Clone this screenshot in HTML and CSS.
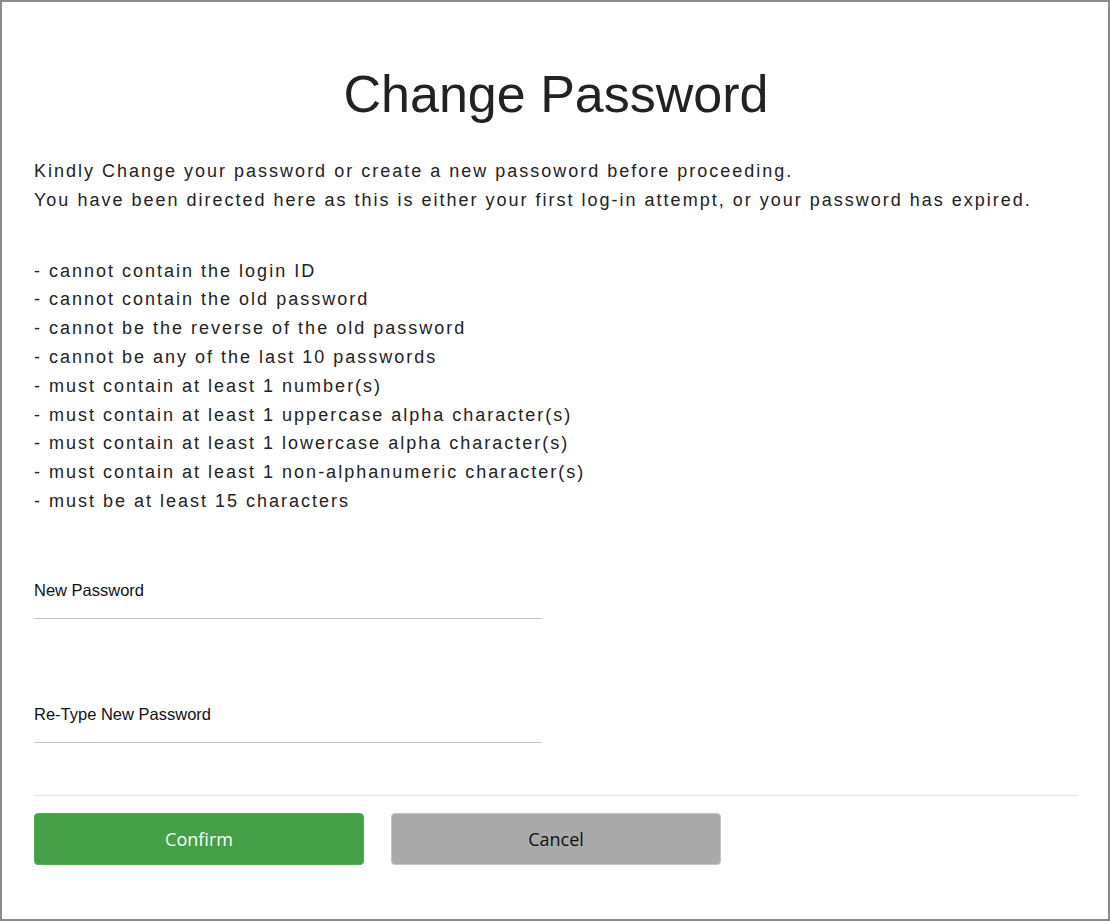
FILE: index.html
```html
<!DOCTYPE html>
<html lang="en">
<head>
  <meta charset="UTF-8" />
  <meta name="viewport" content="width=device-width, initial-scale=1.0" />
  <title>Change Password</title>
  <link rel="stylesheet" href="styles.css">
</head>
<body>
  <div class="frame">
    <h1>Change Password</h1>
    <p class="intro">
      Kindly Change your password or create a new passoword before proceeding.<br/>
      You have been directed here as this is either your first log-in attempt, or your password has expired.
    </p>
    <ul class="rules">
      <li>- cannot contain the login ID</li>
      <li>- cannot contain the old password</li>
      <li>- cannot be the reverse of the old password</li>
      <li>- cannot be any of the last 10 passwords</li>
      <li>- must contain at least 1 number(s)</li>
      <li>- must contain at least 1 uppercase alpha character(s)</li>
      <li>- must contain at least 1 lowercase alpha character(s)</li>
      <li>- must contain at least 1 non-alphanumeric character(s)</li>
      <li>- must be at least 15 characters</li>
    </ul>

    <div class="field">
      <label for="newPass">New Password</label>
      <input type="password" id="newPass" />
    </div>
    <div class="field second">
      <label for="rePass">Re-Type New Password</label>
      <input type="password" id="rePass" />
    </div>

    <hr class="sep" />

    <div class="actions">
      <button class="btn confirm">Confirm</button>
      <button class="btn cancel">Cancel</button>
    </div>
  </div>
</body>
</html>
```

FILE: styles.css
```css
html, body {
  margin: 0;
  padding: 0;
  background: #fff;
}
.frame {
  box-sizing: border-box;
  width: 1110px;
  height: 921px;
  border: 2px solid #8a8a8a;
  padding: 62px 30px 0 32px;
  font-family: "Liberation Sans", Arial, sans-serif;
  color: #222;
}
h1 {
  margin: 0;
  font-size: 52px;
  font-weight: normal;
  line-height: 60px;
  text-align: center;
}
.intro {
  margin: 33px 0 0;
  font-size: 18px;
  letter-spacing: 2px;
  line-height: 28.8px;
}
.rules {
  list-style: none;
  margin: 42px 0 0;
  padding: 0;
  font-size: 18px;
  letter-spacing: 2px;
  line-height: 28.8px;
}
.field {
  width: 508px;
  margin-top: 64px;
}
.field.second {
  margin-top: 85px;
}
.field label {
  display: block;
  font-size: 16.5px;
  line-height: 20px;
  color: #111;
}
.field input {
  display: block;
  box-sizing: border-box;
  width: 100%;
  height: 19px;
  border: none;
  border-bottom: 1px solid #c8c8c8;
  outline: none;
  padding: 0;
}
.sep {
  border: none;
  border-top: 1px solid #e3e3e3;
  margin: 52px 0 0;
}
.actions {
  display: flex;
  gap: 27px;
  margin-top: 17px;
}
.btn {
  width: 330px;
  height: 52px;
  border-radius: 4px;
  border: 1px solid transparent;
  font-family: "Open Sans", sans-serif;
  font-size: 18px;
  cursor: pointer;
}
.confirm {
  background: #43a047;
  border-color: #4caf50;
  color: #fff;
}
.cancel {
  background: #aaaaaa;
  border-color: #c4c4c4;
  color: #111;
}
```
